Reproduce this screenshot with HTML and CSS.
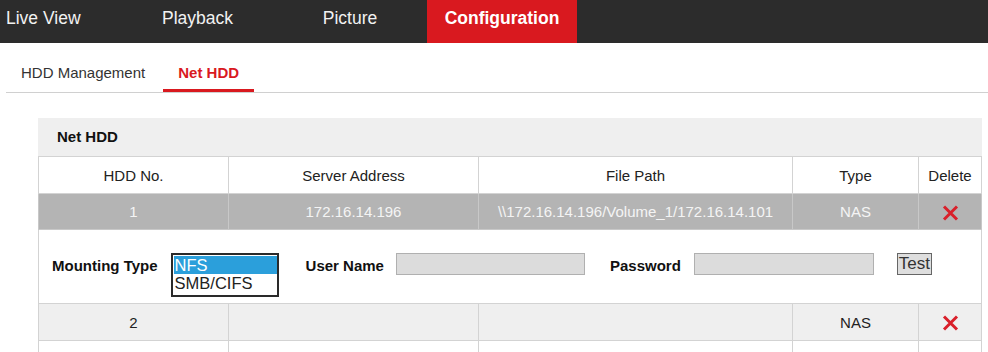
FILE: index.html
```html
<!DOCTYPE html>
<html lang="en">
<head>
    <meta charset="UTF-8">
    <title>Net HDD</title>
    <link rel="stylesheet" href="styles.css">
</head>
<body>

<div class="topnav">
    <div class="nav-item first">Live View</div>
    <div class="nav-item second">Playback</div>
    <div class="nav-item third">Picture</div>
    <div class="nav-item active">Configuration</div>
</div>

<div class="tabs">
    <div class="tab">HDD Management</div>
    <div class="tab selected">Net HDD</div>
</div>

<div class="panel">
    <div class="panel-title">Net HDD</div>
    <table class="hdd-table">
        <tr class="head">
            <td class="c-no">HDD No.</td>
            <td class="c-addr">Server Address</td>
            <td class="c-path">File Path</td>
            <td class="c-type">Type</td>
            <td class="c-del">Delete</td>
        </tr>
        <tr class="row picked">
            <td>1</td>
            <td>172.16.14.196</td>
            <td>\\172.16.14.196/Volume_1/172.16.14.101</td>
            <td>NAS</td>
            <td><span class="del-icon"><svg width="17" height="16" viewBox="0 0 17 16"><path d="M2 1.5 L15 14.5 M15 1.5 L2 14.5" stroke="#d9202a" stroke-width="3"/></svg></span></td>
        </tr>
        <tr class="detail">
            <td colspan="5">
                <div class="mount-form">
                    <span class="label">Mounting Type</span>
                    <div class="listbox">
                        <div class="opt on">NFS</div>
                        <div class="opt">SMB/CIFS</div>
                    </div>
                    <span class="label user">User Name</span>
                    <div class="field user-field"></div>
                    <span class="label pass">Password</span>
                    <div class="field pass-field"></div>
                    <button class="test-btn">Test</button>
                </div>
            </td>
        </tr>
        <tr class="row grey">
            <td>2</td>
            <td></td>
            <td></td>
            <td>NAS</td>
            <td><span class="del-icon"><svg width="17" height="16" viewBox="0 0 17 16"><path d="M2 1.5 L15 14.5 M15 1.5 L2 14.5" stroke="#d9202a" stroke-width="3"/></svg></span></td>
        </tr>
        <tr class="row">
            <td></td>
            <td></td>
            <td></td>
            <td></td>
            <td><span class="del-icon"><svg width="17" height="16" viewBox="0 0 17 16"><path d="M2 1.5 L15 14.5 M15 1.5 L2 14.5" stroke="#d9202a" stroke-width="3"/></svg></span></td>
        </tr>
    </table>
</div>

</body>
</html>
```

FILE: styles.css
```css
body {
    margin: 0;
    font-family: "Liberation Sans", Arial, sans-serif;
    color: #222;
    background-color: white;
    overflow: hidden;
}
.topnav {
    display: flex;
    height: 43px;
    background-color: #2c2c2c;
}
.nav-item {
    color: #f2f2f2;
    font-size: 17.5px;
    line-height: 36px;
    text-align: center;
}
.nav-item.first {
    width: 116px;
    padding-left: 6px;
    text-align: left;
}
.nav-item.second {
    width: 151px;
}
.nav-item.third {
    width: 154px;
}
.nav-item.active {
    width: 150px;
    background-color: #d9191f;
    color: white;
    font-weight: bold;
}
.tabs {
    display: flex;
    align-items: flex-end;
    gap: 3px;
    height: 49px;
    margin-left: 6px;
    border-bottom: 1px solid #d0d0d0;
}
.tab {
    padding: 0 15px 7px;
    font-size: 15px;
    line-height: 18px;
    color: #333;
    border-bottom: 3px solid transparent;
}
.tab.selected {
    color: #d9191f;
    font-weight: bold;
    border-bottom-color: #d9191f;
}
.panel {
    margin: 25px 6px 0 38px;
}
.panel-title {
    height: 38px;
    line-height: 37px;
    padding-left: 19px;
    background-color: #efefef;
    font-size: 15px;
    font-weight: bold;
    color: #111;
}
.hdd-table {
    width: 100%;
    border-collapse: collapse;
    font-size: 15px;
}
.hdd-table td {
    border: 1px solid #d3d3d3;
    text-align: center;
    padding: 0;
    height: 35px;
    color: #222;
}
.hdd-table .head td {
    height: 36px;
    background-color: white;
}
.c-no { width: 189px; }
.c-addr { width: 249px; }
.c-path { width: 313px; }
.c-type { width: 125px; }
.c-del { width: 62px; }
.row.picked td {
    background-color: #b4b4b4;
    color: #f4f4f4;
    border-color: #c8c8c8;
}
.row.grey td {
    background-color: #efefef;
    height: 36px;
}
.del-icon {
    display: inline-block;
    vertical-align: middle;
}
.del-icon svg {
    display: block;
}
.hdd-table .detail td {
    height: 73px;
    text-align: left;
    vertical-align: top;
}
.mount-form {
    display: flex;
    align-items: flex-start;
    padding: 23px 0 0 13px;
}
.label {
    font-weight: bold;
    font-size: 15px;
    color: #111;
    line-height: 20px;
    margin-top: 3px;
}
.listbox {
    width: 103px;
    margin-left: 13px;
    border: 2px solid #2a2a2a;
    background-color: white;
    padding: 1px 0 3px 1px;
}
.opt {
    font-size: 16.5px;
    line-height: 18px;
    padding-left: 1px;
    color: #222;
}
.opt.on {
    background-color: #2b9fdb;
    color: white;
}
.label.user {
    margin-left: 27px;
}
.field {
    height: 20px;
    border: 1px solid #b0b0b0;
    background-color: #dcdcdc;
    background-image: radial-gradient(#cfcfcf 30%, transparent 31%);
    background-size: 2px 2px;
}
.user-field {
    width: 187px;
    margin-left: 12px;
}
.label.pass {
    margin-left: 25px;
}
.pass-field {
    width: 178px;
    margin-left: 13px;
}
.test-btn {
    margin-left: 23px;
    height: 22px;
    padding: 0 1px;
    font-family: "Liberation Sans", Arial, sans-serif;
    font-size: 17px;
    line-height: 20px;
    color: #333;
    background-color: #dedede;
    border: 1px solid #666;
    border-radius: 0;
}
```
